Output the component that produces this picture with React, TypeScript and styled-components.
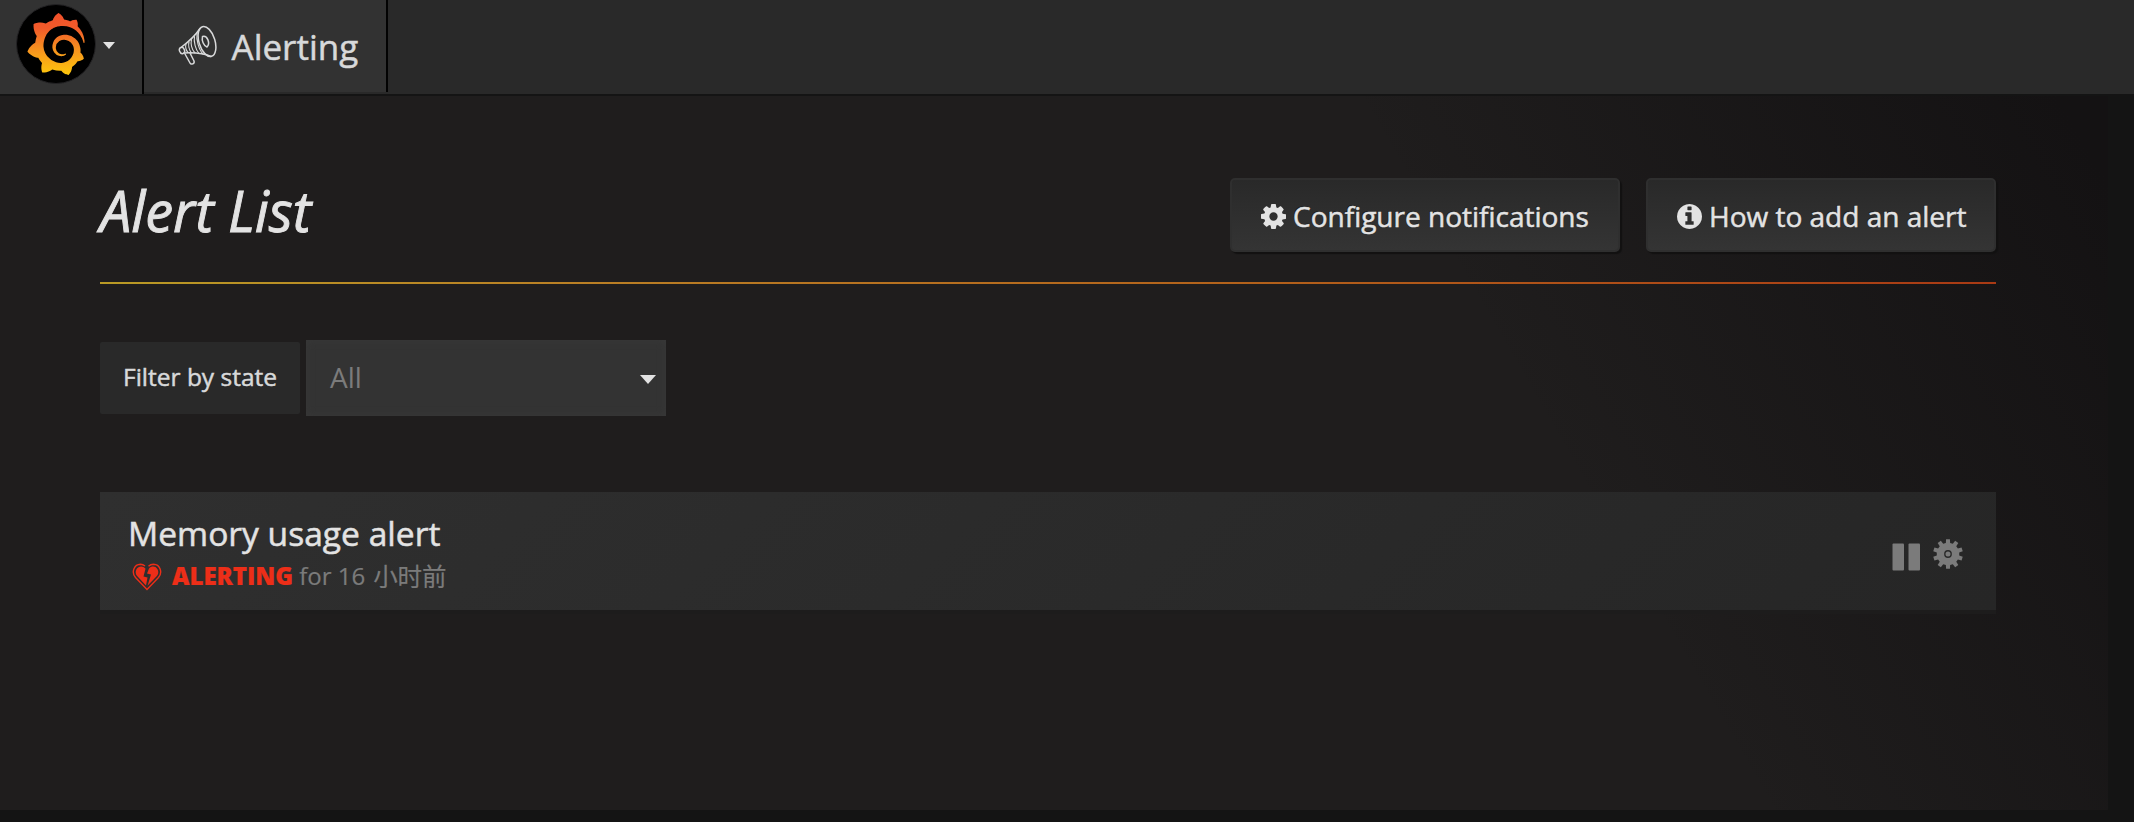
import React from "react";
import styled, { createGlobalStyle } from "styled-components";
import { SiGrafana } from "react-icons/si";

const GlobalStyle = createGlobalStyle`
  * { box-sizing: border-box; }
  body {
    margin: 0;
    background: #141414;
    color: #e3e3e3;
    font-family: "Open Sans", "Noto Sans CJK SC", sans-serif;
    -webkit-text-stroke: 0.5px currentColor;
  }
`;

const Page = styled.div`
  display: flex;
  flex-direction: column;
  height: 822px;
  padding-bottom: 12px;
  overflow: hidden;
`;

const Navbar = styled.header`
  display: flex;
  flex: none;
  height: 96px;
  background: #292929;
  border-bottom: 2px solid #141414;
`;

const LogoMenu = styled.a`
  display: flex;
  align-items: center;
  width: 144px;
  padding: 0 0 6px 16px;
  background: #323232;
  border-right: 2px solid #020202;
`;

const LogoDisc = styled.span`
  display: flex;
  align-items: center;
  justify-content: center;
  width: 80px;
  height: 80px;
  border: 1px solid #232224;
  border-radius: 50%;
  background: #000;
`;

const Caret = styled.span`
  width: 0;
  height: 0;
  border-left: 6px solid transparent;
  border-right: 6px solid transparent;
  border-top: 7px solid #e3e3e3;
`;

const MenuCaret = styled(Caret)`
  margin: 3px 0 0 7px;
`;

const NavTitle = styled.a`
  display: flex;
  align-items: center;
  width: 244px;
  height: 92px;
  padding-left: 34px;
  background: #323232;
  border-right: 2px solid #020202;
  color: #d8d9da;
  font-size: 35px;
`;

const NavTitleText = styled.span`
  margin: 2px 0 0 13.500px;
  line-height: 48px;
`;

const Content = styled.main`
  flex: 1;
  width: 2108px;
  padding: 82px 112px 0 100px;
  background: linear-gradient(60deg, transparent 70%, #141213 98%), #1f1d1d;
`;

const PageHeader = styled.div`
  display: flex;
  align-items: flex-start;
  gap: 26px;
  height: 106px;
  border-bottom: 2px solid;
  border-image: linear-gradient(to right, #b99a25 0%, #ba8025 25%, #b3621b 60%, #a93a14 100%) 1;
`;

const Heading = styled.h1`
  flex: 1;
  margin: -6px 0 0;
  font-size: 56px;
  font-style: italic;
  font-weight: 400;
  letter-spacing: -0.1px;
  line-height: 76px;
  -webkit-text-stroke-width: 0.9px;
`;

const Button = styled.button<{ $width: number }>`
  display: flex;
  align-items: center;
  width: ${(p) => p.$width}px;
  height: 74px;
  padding: 2px 0 0 29px;
  gap: 7px;
  border: 2px solid #2f2f2f;
  border-radius: 5px;
  background: linear-gradient(#292929, #343434);
  box-shadow: 2px 2px 1px #121111;
  color: #e3e3e3;
  font-family: inherit;
  font-size: 28px;
  text-shadow: -1px -1px 0 rgba(0, 0, 0, 0.35);
  white-space: nowrap;
`;

const FilterRow = styled.div`
  display: flex;
  align-items: center;
  gap: 6px;
  margin-top: 56px;
`;

const FilterLabel = styled.label`
  width: 200px;
  height: 72px;
  padding-left: 23px;
  border-radius: 2px;
  background: #292929;
  color: #d8d9da;
  font-size: 24.5px;
  line-height: 70px;
  white-space: nowrap;
`;

const Select = styled.div`
  display: flex;
  align-items: center;
  justify-content: space-between;
  width: 360px;
  height: 76px;
  padding: 0 10px 2px 24px;
  background: #333;
  box-shadow: inset 0 0 6px 2px #373737;
  color: #7b7b7b;
  font-size: 28px;
  -webkit-text-stroke-width: 0;
`;

const SelectCaret = styled(Caret)`
  margin-top: 5px;
  border-left-width: 8px;
  border-right-width: 8px;
  border-top-width: 9px;
`;

const AlertCard = styled.section`
  display: flex;
  align-items: center;
  justify-content: space-between;
  height: 118px;
  margin-top: 76px;
  padding: 2px 33px 0 28px;
  background: linear-gradient(135deg, #2f2f2f, #262626);
  box-shadow: 0 4px 0 #1d1c1c;
`;

const AlertName = styled.div`
  font-size: 33.6px;
  line-height: 46px;
  white-space: nowrap;
`;

const AlertState = styled.div`
  display: flex;
  align-items: center;
  height: 38px;
  padding-left: 4px;
  color: #7b7b7b;
  font-size: 24px;
  white-space: nowrap;
  -webkit-text-stroke-width: 0.2px;

  svg {
    margin-top: 3px;
  }
`;

const StateText = styled.span`
  margin: 0 6px 0 10px;
  color: #ed2e18;
  font-weight: 800;
`;

const Elapsed = styled.span`
  margin-left: 8px;
  font-size: 24.5px;
`;

const Actions = styled.div`
  display: flex;
  align-items: flex-end;
  gap: 12px;
  padding-top: 5px;
`;

const faBox = "0 128 1536 1536";

const CogIcon = () => (
  <svg width="25" height="25" viewBox={faBox} fill="currentColor">
    <path d="M1024 896q0-106-75-181t-181-75-181 75-75 181 75 181 181 75 181-75 75-181zm512-109v222q0 12-8 23t-20 13l-185 28q-19 54-39 91 35 50 107 138 10 12 10 25t-9 23q-27 37-99 108t-94 71q-12 0-26-9l-138-108q-44 23-91 38-16 136-29 186-7 28-36 28h-222q-14 0-24.500-8.500t-11.500-21.500l-28-184q-49-16-90-37l-141 107q-10 9-25 9-14 0-25-11-126-114-165-168-7-10-7-23 0-12 8-23 15-21 51-66.500t54-70.500q-27-50-41-99l-183-27q-13-2-21-12.500t-8-23.500v-222q0-12 8-23t19-13l186-28q14-46 39-92-40-57-107-138-10-12-10-24 0-10 9-23 26-36 98.500-107.500t94.500-71.500q13 0 26 10l138 107q44-23 91-38 16-136 29-186 7-28 36-28h222q14 0 24.500 8.500t11.500 21.500l28 184q49 16 90 37l142-107q9-9 24-9 13 0 25 10 129 119 165 170 7 8 7 22 0 12-8 23-15 21-51 66.500t-54 70.500q26 50 41 98l183 28q13 2 21 12.500t8 23.500z" />
  </svg>
);

const InfoIcon = () => (
  <svg width="25" height="25" viewBox={faBox} fill="currentColor">
    <path d="M1024 1376v-160q0-14-9-23t-23-9h-96v-512q0-14-9-23t-23-9h-320q-14 0-23 9t-9 23v160q0 14 9 23t23 9h96v320h-96q-14 0-23 9t-9 23v160q0 14 9 23t23 9h448q14 0 23-9t9-23zm-128-896v-160q0-14-9-23t-23-9h-192q-14 0-23 9t-9 23v160q0 14 9 23t23 9h192q14 0 23-9t9-23zm640 416q0 209-103 385.500t-279.500 279.500-385.500 103-385.500-103-279.500-279.500-103-385.500 103-385.500 279.500-279.500 385.500-103 385.500 103 279.500 279.500 103 385.500z" />
  </svg>
);

const MegaphoneIcon = () => (
  <svg width="40" height="42" viewBox="0 0 40 42" fill="none" stroke="#d8d9da" strokeWidth="1.5" strokeLinecap="round" strokeLinejoin="round">
    <ellipse cx="29" cy="16.500" rx="8" ry="15.500" transform="rotate(-17 29 16.500)" />
    <path d="M22 3.500C17 11 9 18 3 22.500M33 31.500C25 28 14 27.500 6 28" />
    <ellipse cx="4" cy="25.500" rx="2.500" ry="3.200" transform="rotate(-20 4 25.500)" />
    <g strokeWidth="1.100">
      <path d="M8 19.500c-1 2 0 6 2 8M11 17c-1 3 0 8 2.500 11M13.500 14.500c-1 4 0 10 3.500 13.500M16.500 11.500c-1 5 1 13 4.500 17M19 8c-1 7 2 17 6 21" />
    </g>
    <path d="M24.500 11.500c5-1.500 8 7 4.500 10.500c-3.500-1.500-5.500-6.500-4.500-10.500z" />
    <path d="M7 29l5 9c1 2 5 1 4-2l-4-8" />
  </svg>
);

const BrokenHeartIcon = () => (
  <svg width="30" height="28" viewBox="0 0 30 28" fill="none">
    <path d="M13 3C11.700 1.900 10.300 1.300 8.500 1.300C2 1.500-1 9 3.500 14.500L15 26.500L26.500 14.500C31 9 28 1.500 21.500 1.300c-2 0-3.700.7-5 2" stroke="#ed2e18" strokeWidth="1.400" />
    <path d="M13.500 5.800C11 2.500 6.500 3 4.600 6c-1.600 2.600-1 5.500 1 7.600L14 22.500l1.500-8-4-1z" fill="#ed2e18" />
    <path d="M17 5.500C19.500 2.700 23.500 3 25.400 6c1.600 2.600 1 5.500-1 7.600L15.500 22.800 19 11.500l-4-1z" fill="#ed2e18" />
  </svg>
);

const PauseIcon = () => (
  <svg width="29" height="28" viewBox="0 0 29 28" fill="#7b7b7b">
    <rect x="0.500" y="0.500" width="11.500" height="27" rx="1" />
    <rect x="16.500" y="0.500" width="11.500" height="27" rx="1" />
  </svg>
);

const TEETH = 10;
const gearPoints = Array.from({ length: TEETH }, (_, i) => {
  const a = (i * 2 * Math.PI) / TEETH;
  return [[-0.19, 11.3], [-0.13, 15], [0.13, 15], [0.19, 11.3]].map(
    ([d, r]) => `${(15 + r * Math.sin(a + d)).toFixed(2)},${(15 - r * Math.cos(a + d)).toFixed(2)}`
  ).join(" ");
}).join(" ");

const GearIcon = styled((props: { className?: string }) => (
  <svg width="30" height="30" viewBox="0 0 30 30" {...props}>
    <polygon points={gearPoints} fill="#7b7b7b" />
    <circle cx="15" cy="15" r="3.200" fill="none" stroke="#2a2a2a" strokeWidth="1.400" />
  </svg>
))`
  margin-bottom: 2px;
`;

const Flame = styled(SiGrafana)`
  width: 62px;
  height: 62px;
`;

const Gradients = styled.svg`
  position: absolute;
`;

export default function App() {
  return (
    <Page>
      <GlobalStyle />
      <Gradients width="0" height="0">
        <linearGradient id="flame" x1="0" y1="0" x2="0" y2="1">
          <stop offset="0" stopColor="#f0502b" />
          <stop offset="0.250" stopColor="#f15b2a" />
          <stop offset="0.600" stopColor="#f7941e" />
          <stop offset="1" stopColor="#fdc70c" />
        </linearGradient>
      </Gradients>
      <Navbar>
        <LogoMenu>
          <LogoDisc>
            <Flame fill="url(#flame)" />
          </LogoDisc>
          <MenuCaret />
        </LogoMenu>
        <NavTitle>
          <MegaphoneIcon />
          <NavTitleText>Alerting</NavTitleText>
        </NavTitle>
      </Navbar>
      <Content>
        <PageHeader>
          <Heading>Alert List</Heading>
          <Button $width={390}>
            <CogIcon />
            Configure notifications
          </Button>
          <Button $width={350}>
            <InfoIcon />
            How to add an alert
          </Button>
        </PageHeader>
        <FilterRow>
          <FilterLabel>Filter by state</FilterLabel>
          <Select>
            All
            <SelectCaret />
          </Select>
        </FilterRow>
        <AlertCard>
          <div>
            <AlertName>Memory usage alert</AlertName>
            <AlertState>
              <BrokenHeartIcon />
              <StateText>ALERTING</StateText>
              for 16
              <Elapsed>小时前</Elapsed>
            </AlertState>
          </div>
          <Actions>
            <PauseIcon />
            <GearIcon />
          </Actions>
        </AlertCard>
      </Content>
    </Page>
  );
}
